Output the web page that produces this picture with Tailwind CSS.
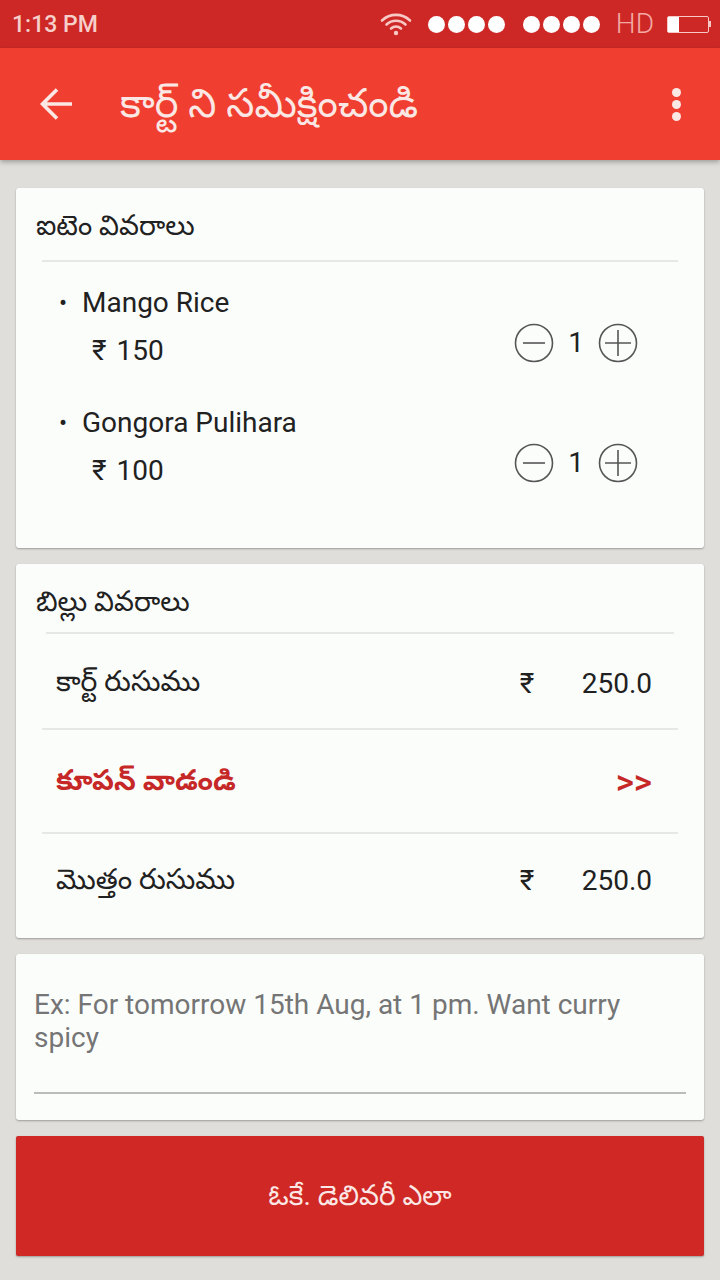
<!DOCTYPE html>
<html lang="te"><head><meta charset="utf-8">
<script src="https://cdn.jsdelivr.net/npm/@tailwindcss/browser@4"></script>
</head>
<body class="m-0">
<div class="w-[720px] h-[1280px] overflow-hidden bg-[#e0dedb] flex flex-col font-['Roboto','Noto_Sans','Noto_Sans_Telugu',sans-serif] text-[#212121]">
  <div class="h-12 bg-[#cd2826] flex items-center pl-[12px] pr-[9px] shrink-0">
    <span class="text-[23px] font-medium text-[#f6cfcb] leading-none">1:13 PM</span>
    <div class="ml-auto flex items-center">
      <svg width="32" height="24" viewBox="0 0 32 24" fill="none" stroke="#f8c9c4" stroke-width="2.6" stroke-linecap="round"><path d="M2 8.5 C10 1 22 1 30 8.5"/><path d="M6.5 12.5 C12 7.5 20 7.5 25.5 12.5"/><path d="M11 16.5 C14 14 18 14 21 16.5"/><circle cx="16" cy="21" r="2.2" fill="#f8c9c4" stroke="none"/></svg>
      <div class="ml-[16px] flex gap-[3px]"><i class="size-[17px] rounded-full bg-white"></i><i class="size-[17px] rounded-full bg-white"></i><i class="size-[17px] rounded-full bg-white"></i><i class="size-[17px] rounded-full bg-white"></i></div>
      <div class="ml-[18px] flex gap-[3px]"><i class="size-[17px] rounded-full bg-white"></i><i class="size-[17px] rounded-full bg-white"></i><i class="size-[17px] rounded-full bg-white"></i><i class="size-[17px] rounded-full bg-white"></i></div>
      <span class="ml-[16px] text-[28px] leading-none font-light text-[#f4aaa4]">HD</span>
      <div class="ml-[13px] flex items-center">
        <div class="w-[42px] h-[17px] border border-[#f8c9c4] rounded-[2px] flex"><div class="w-[11px] h-full bg-white"></div></div>
        <div class="w-[2px] h-[6px] bg-[#f8c9c4]"></div>
      </div>
    </div>
  </div>
  <div class="h-28 bg-[#f03e30] flex items-center shrink-0 shadow-[0_2px_5px_rgba(0,0,0,0.3)] relative">
    <svg class="ml-[38px] shrink-0" width="36" height="36" viewBox="0 0 36 36" fill="none" stroke="#fbe7e4" stroke-width="3.6"><path d="M34 18H6M19 3.5 4.5 18 19 32.5"/></svg>
    <span class="ml-[46px] text-[40px] leading-none text-[#fbe7e4]">కార్ట్ ని సమీక్షించండి</span>
    <div class="ml-auto mr-[39px] flex flex-col gap-[3px]"><i class="size-[9px] rounded-full bg-[#fbe7e4]"></i><i class="size-[9px] rounded-full bg-[#fbe7e4]"></i><i class="size-[9px] rounded-full bg-[#fbe7e4]"></i></div>
  </div>
  <div class="flex-1 px-4 pt-7 flex flex-col gap-4">
    <div class="h-[360px] bg-[#fbfdfb] rounded-[3px] shadow-[0_1px_2px_rgba(0,0,0,0.3)] px-[20px] flex flex-col">
      <div class="h-[72px] pt-[4px] flex items-center text-[28px]">ఐటెం వివరాలు</div>
      <div class="h-[2px] bg-[#e5e8e5] mx-[6px]"></div>
      <div class="mt-[17px] pl-[23px] pr-[46px] flex flex-col gap-[24px]">
        <div class="flex items-end">
          <div class="flex-1">
            <div class="h-12 flex items-center text-[28px]"><span class="w-[23px] text-[24px]">•</span>Mango Rice</div>
            <div class="h-12 flex items-center text-[28px] pl-[33px] [word-spacing:3px]">₹ 150</div>
          </div>
          <div class="flex items-center mb-[11px]">
            <svg width="40" height="40" viewBox="0 0 40 40" fill="none" stroke="#555" stroke-width="1.6"><circle cx="20" cy="20" r="18.5"/><path d="M9 20H31"/></svg>
            <span class="w-[44px] text-center text-[28px] pt-[1px]">1</span>
            <svg width="40" height="40" viewBox="0 0 40 40" fill="none" stroke="#555" stroke-width="1.6"><circle cx="20" cy="20" r="18.5"/><path d="M7 20H33M20 7V33"/></svg>
          </div>
        </div>
        <div class="flex items-end">
          <div class="flex-1">
            <div class="h-12 flex items-center text-[28px]"><span class="w-[23px] text-[24px]">•</span>Gongora Pulihara</div>
            <div class="h-12 flex items-center text-[28px] pl-[33px] [word-spacing:3px]">₹ 100</div>
          </div>
          <div class="flex items-center mb-[11px]">
            <svg width="40" height="40" viewBox="0 0 40 40" fill="none" stroke="#555" stroke-width="1.6"><circle cx="20" cy="20" r="18.5"/><path d="M9 20H31"/></svg>
            <span class="w-[44px] text-center text-[28px] pt-[1px]">1</span>
            <svg width="40" height="40" viewBox="0 0 40 40" fill="none" stroke="#555" stroke-width="1.6"><circle cx="20" cy="20" r="18.5"/><path d="M7 20H33M20 7V33"/></svg>
          </div>
        </div>
      </div>
    </div>
    <div class="h-[374px] bg-[#fbfdfb] rounded-[3px] shadow-[0_1px_2px_rgba(0,0,0,0.3)] px-[20px] flex flex-col">
      <div class="h-[68px] pt-[7px] flex items-center text-[28px]">బిల్లు వివరాలు</div>
      <div class="h-[2px] bg-[#e5e8e5] mx-[10px]"></div>
      <div class="h-[94px] flex items-center pl-[20px] pr-[32px] text-[28px]"><span class="flex-1 pt-[2px] text-[28.3px]">కార్ట్ రుసుము</span><span class="w-[62px] pt-[6px]">₹</span><span class="pt-[6px]">250.0</span></div>
      <div class="h-[2px] bg-[#e5e8e5] mx-[6px]"></div>
      <div class="h-[102px] flex items-center pl-[20px] pr-[32px] text-[28px] font-bold text-[#c62828]"><span class="flex-1 text-[28.3px]">కూపన్ వాడండి</span><span class="font-medium text-[35px] pt-[2px] leading-none">&gt;&gt;</span></div>
      <div class="h-[2px] bg-[#e5e8e5] mx-[6px]"></div>
      <div class="h-[92px] flex items-center pl-[20px] pr-[32px] text-[28px]"><span class="flex-1 text-[28.3px]">మొత్తం రుసుము</span><span class="w-[62px] pt-[2px]">₹</span><span class="pt-[2px]">250.0</span></div>
    </div>
    <div class="h-[166px] bg-[#fbfdfb] rounded-[3px] shadow-[0_1px_2px_rgba(0,0,0,0.3)] px-[18px] pt-[34px] flex flex-col">
      <div class="text-[28px] leading-[33px] text-[#757575] h-[104px]">Ex: For tomorrow 15th Aug, at 1 pm. Want curry spicy</div>
      <div class="h-[2px] bg-[#b9bcb9]"></div>
    </div>
    <div class="h-[120px] bg-[#cf2825] rounded-[2px] shadow-[0_1px_2px_rgba(0,0,0,0.3)] flex items-center justify-center text-[28px] text-[#fbe7e4]">ఓకే. డెలివరీ ఎలా</div>
  </div>
</div>
</body></html>
